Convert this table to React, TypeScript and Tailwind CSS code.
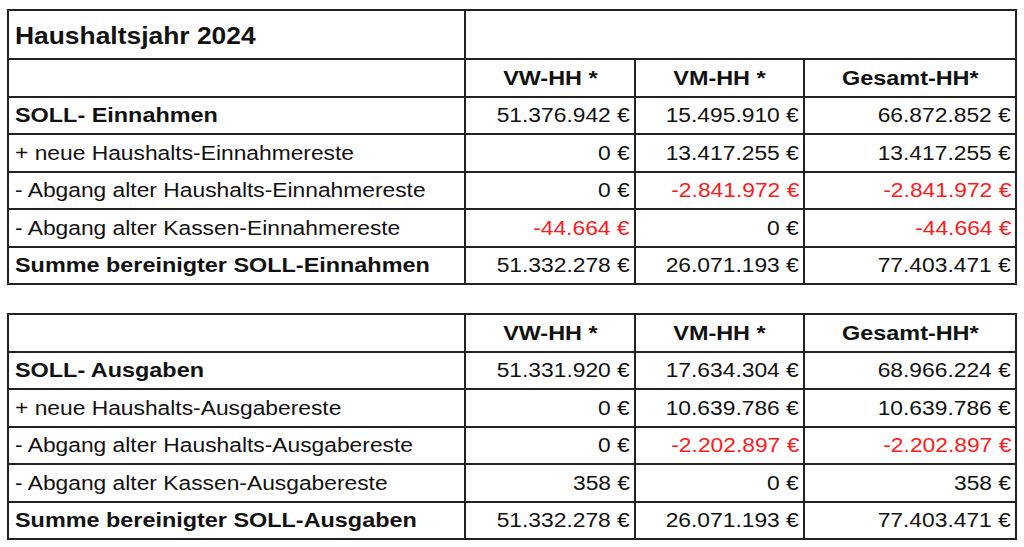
import React from 'react';

type Row = { label: string; bold?: boolean; vals: string[]; red?: boolean[] };

const einnahmen: Row[] = [
  { label: 'SOLL- Einnahmen', bold: true, vals: ['51.376.942 €', '15.495.910 €', '66.872.852 €'] },
  { label: '+ neue Haushalts-Einnahmereste', vals: ['0 €', '13.417.255 €', '13.417.255 €'] },
  { label: '- Abgang alter Haushalts-Einnahmereste', vals: ['0 €', '-2.841.972 €', '-2.841.972 €'], red: [false, true, true] },
  { label: '- Abgang alter Kassen-Einnahmereste', vals: ['-44.664 €', '0 €', '-44.664 €'], red: [true, false, true] },
  { label: 'Summe bereinigter SOLL-Einnahmen', bold: true, vals: ['51.332.278 €', '26.071.193 €', '77.403.471 €'] },
];

const ausgaben: Row[] = [
  { label: 'SOLL- Ausgaben', bold: true, vals: ['51.331.920 €', '17.634.304 €', '68.966.224 €'] },
  { label: '+ neue Haushalts-Ausgabereste', vals: ['0 €', '10.639.786 €', '10.639.786 €'] },
  { label: '- Abgang alter Haushalts-Ausgabereste', vals: ['0 €', '-2.202.897 €', '-2.202.897 €'], red: [false, true, true] },
  { label: '- Abgang alter Kassen-Ausgabereste', vals: ['358 €', '0 €', '358 €'] },
  { label: 'Summe bereinigter SOLL-Ausgaben', bold: true, vals: ['51.332.278 €', '26.071.193 €', '77.403.471 €'] },
];

const cell = 'border-2 border-[#222] px-[6px] py-0';

// Text im Original ist etwas breiter gezogen
const Wide = ({ children, cls }: { children: React.ReactNode; cls: string }) => (
  <span className={`inline-block whitespace-nowrap ${cls}`}>{children}</span>
);

const Tabelle = ({ rows, title }: { rows: Row[]; title?: string }) => (
  <table className="w-[1010px] table-fixed border-collapse text-[20px] leading-none text-[#111]">
    <colgroup>
      <col className="w-[457px]" />
      <col className="w-[170px]" />
      <col className="w-[169px]" />
      <col className="w-[212px]" />
    </colgroup>
    <tbody>
      {title && (
        <tr className="h-[49px]">
          <td className={`${cell} pt-[3px] text-[24px] font-bold`}>
            <Wide cls="scale-x-[1.1] origin-left">{title}</Wide>
          </td>
          <td className={cell} colSpan={3}></td>
        </tr>
      )}
      <tr className="h-[37.5px]">
        <td className={cell}></td>
        <td className={`${cell} text-center font-bold`}><Wide cls="scale-x-[1.17] origin-center">VW-HH *</Wide></td>
        <td className={`${cell} text-center font-bold`}><Wide cls="scale-x-[1.17] origin-center">VM-HH *</Wide></td>
        <td className={`${cell} text-center font-bold`}><Wide cls="scale-x-[1.17] origin-center">Gesamt-HH*</Wide></td>
      </tr>
      {rows.map((r) => (
        <tr key={r.label} className="h-[37.5px]">
          <td className={`${cell} ${r.bold ? 'font-bold' : ''}`}>
            <Wide cls={r.bold ? 'scale-x-[1.17] origin-left' : 'scale-x-[1.14] origin-left'}>{r.label}</Wide>
          </td>
          {r.vals.map((v, i) => (
            <td key={i} className={`${cell} pr-[4px] text-right ${r.red?.[i] ? 'text-[#ff1a1a]' : ''}`}>
              <Wide cls="scale-x-[1.14] origin-right">{v}</Wide>
            </td>
          ))}
        </tr>
      ))}
    </tbody>
  </table>
);

export default function App() {
  return (
    <div className="w-[1024px] h-[547px] bg-white pt-[9px] pl-[7px] font-['Liberation_Sans',Arial,sans-serif]">
      <div className="flex flex-col gap-[28px]">
        <Tabelle rows={einnahmen} title="Haushaltsjahr 2024" />
        <Tabelle rows={ausgaben} />
      </div>
    </div>
  );
}
